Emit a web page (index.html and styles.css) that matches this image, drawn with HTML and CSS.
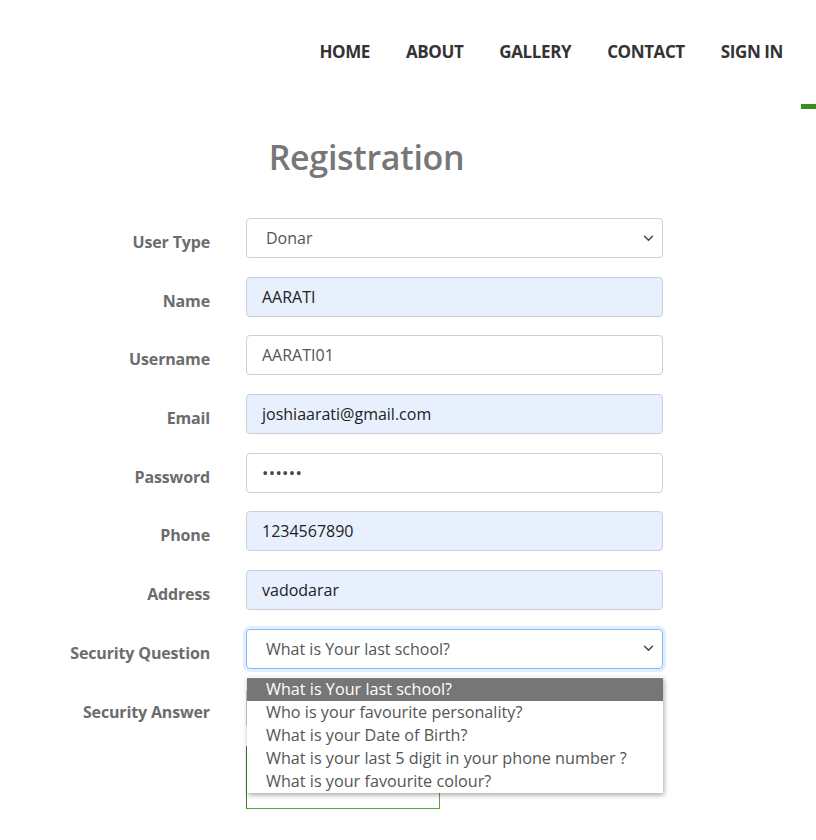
FILE: index.html
```html
<!DOCTYPE html>
<html>
<head>
<meta charset="utf-8">
<link rel="stylesheet" href="styles.css">
</head>
<body>
<header class="topbar">
  <nav class="nav">
    <a class="nav-link">HOME</a>
    <a class="nav-link">ABOUT</a>
    <a class="nav-link">GALLERY</a>
    <a class="nav-link">CONTACT</a>
    <a class="nav-link">SIGN IN</a>
  </nav>
  <span class="accent"></span>
</header>
<main class="page">
  <h1 class="title">Registration</h1>
  <form class="form">
    <label class="lbl">User Type</label>
    <div class="field select"><span class="sel-text">Donar</span><svg class="chev" viewBox="0 0 12 8" width="11" height="7"><path d="M1.5 1.5 L6 6 L10.5 1.5" fill="none" stroke="#444" stroke-width="1.7" stroke-linecap="round" stroke-linejoin="round"/></svg></div>

    <label class="lbl">Name</label>
    <div class="field auto">AARATI</div>

    <label class="lbl">Username</label>
    <div class="field plain">AARATI01</div>

    <label class="lbl">Email</label>
    <div class="field auto">joshiaarati@gmail.com</div>

    <label class="lbl">Password</label>
    <div class="field plain pw">••••••</div>

    <label class="lbl">Phone</label>
    <div class="field auto">1234567890</div>

    <label class="lbl">Address</label>
    <div class="field auto">vadodarar</div>

    <label class="lbl">Security Question</label>
    <div class="field select focus">
      <span class="sel-text">What is Your last school?</span><svg class="chev" viewBox="0 0 12 8" width="11" height="7"><path d="M1.5 1.5 L6 6 L10.5 1.5" fill="none" stroke="#444" stroke-width="1.7" stroke-linecap="round" stroke-linejoin="round"/></svg>
      <ul class="dropdown">
        <li class="opt active">What is Your last school?</li>
        <li class="opt">Who is your favourite personality?</li>
        <li class="opt">What is your Date of Birth?</li>
        <li class="opt">What is your last 5 digit in your phone number ?</li>
        <li class="opt">What is your favourite colour?</li>
      </ul>
    </div>

    <label class="lbl">Security Answer</label>
    <div class="field plain"></div>

    <span></span>
    <div class="btn"></div>
  </form>
</main>
</body>
</html>
```
FILE: styles.css
```css
* { box-sizing: border-box; }
html, body { margin: 0; padding: 0; background: #fff; }
body { font-family: "Open Sans", "Noto Sans", sans-serif; color: #333; }

.topbar { position: relative; height: 110px; }
.nav { display: flex; justify-content: flex-end; gap: 36px; padding: 40px 33px 0 0; }
.nav-link { font-weight: 700; font-size: 17px; color: #333; letter-spacing: -0.4px; line-height: 24px; }
.accent { position: absolute; right: 0; top: 104px; width: 15px; height: 5px; background: #3b8e1d; }

.page { width: 593px; margin-left: 70px; }
.title { margin: 24px 0 38px; text-align: center; font-size: 34px; font-weight: 600; color: #777; line-height: 46px; letter-spacing: -0.3px; }

.form { display: grid; grid-template-columns: 140px 417px; column-gap: 36px; row-gap: 18.7px; }
.lbl { text-align: right; font-weight: 700; font-size: 16px; color: #6c6c6c; padding-top: 12px; line-height: 24px; white-space: nowrap; letter-spacing: -0.15px; }
.field { position: relative; height: 40px; border: 1px solid #cfcfcf; border-radius: 4px; padding: 0 15px; display: flex; align-items: center; font-size: 16px; color: #222; }
.auto { background: #e8f0fe; border-color: #c9d0dc; }
.plain { color: #555; }
.pw { font-size: 17px; color: #444; letter-spacing: 0.3px; }
.select { padding-left: 19px; padding-right: 8px; color: #555; justify-content: space-between; }
.focus { border-color: #86b7fe; box-shadow: 0 0 0 3px rgba(13,110,253,0.12); }

.dropdown { position: absolute; left: 0; top: 47px; width: 416px; margin: 0; padding: 1px 0 0; list-style: none; background: #fff; box-shadow: 1px 2px 5px rgba(0,0,0,0.35); z-index: 5; }
.opt { height: 23px; line-height: 23px; padding-left: 19px; font-size: 16.2px; color: #555; }
.opt.active { background: #767676; color: #fff; }

.btn { width: 194px; height: 63px; border: 1px solid #5aa53a; border-left-color: #3b7d22; }
```
